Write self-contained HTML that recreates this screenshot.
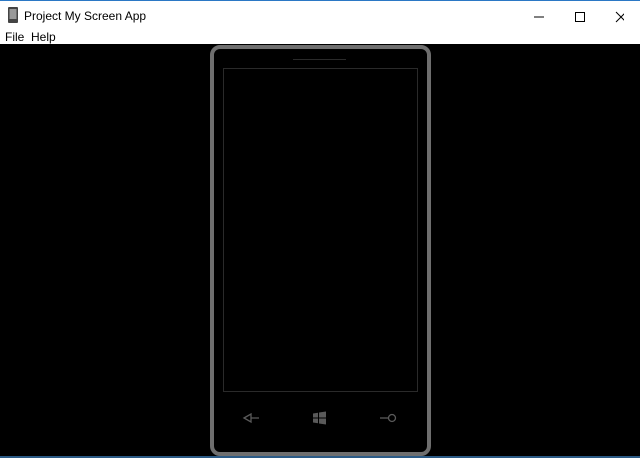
<!DOCTYPE html>
<html><head><style>
body{margin:0;width:640px;height:458px;overflow:hidden;background:#000;font-family:"Liberation Sans",sans-serif;position:relative}
.title{position:absolute;left:0;top:0;width:640px;height:30px;background:#fff;border-top:1px solid #2b78c5;box-sizing:border-box}
.title span{position:absolute;left:24px;top:8px;font-size:12px;color:#000}
.menu{position:absolute;left:0;top:30px;width:640px;height:14px;background:#fff;font-size:12px}
.menu span{position:absolute;top:0}
.phone{position:absolute;left:210px;top:45px;width:221px;height:411px;box-sizing:border-box;border:4px solid #6e6e6e;border-radius:10px}
.screen{position:absolute;left:223px;top:68px;width:195px;height:324px;box-sizing:border-box;border:1px solid #2a2a2a}
.sp{position:absolute;left:293px;top:59px;width:53px;height:1px;background:#2a2a2a}
.bot{position:absolute;left:0;top:456px;width:640px;height:2px;background:#2b5a85}
</style></head><body>
<div class="title">
<svg style="position:absolute;left:7px;top:6px" width="12" height="17"><rect x="1" y="0" width="10" height="16" rx="1" fill="#444"/><rect x="2.5" y="2" width="7" height="10" fill="#999"/></svg>
<span>Project My Screen App</span>
<svg style="position:absolute;left:534px;top:10px" width="90" height="12"><line x1="0" y1="6" x2="10" y2="6" stroke="#000"/><rect x="41.5" y="1.5" width="9" height="9" fill="none" stroke="#000"/><path d="M82 1l10 10M92 1l-10 10" stroke="#000"/></svg>
</div>
<div class="menu"><span style="left:5px">File</span><span style="left:31px">Help</span></div>
<div class="phone"></div>
<div class="sp"></div>
<div class="screen"></div>
<svg style="position:absolute;left:240px;top:410px" width="160" height="16">
<path d="M4 8l7-4v8z M11 8h8" fill="none" stroke="#5a5a5a" stroke-width="1.3"/>
<path d="M73 3.5l5-0.8v4.8h-5z M79 2.5l7-1v6h-7z M73 8.5h5v4.8l-5-0.8z M79 8.5h7v6l-7-1z" fill="#5a5a5a"/>
<path d="M140 8h8" stroke="#5a5a5a" stroke-width="1.3"/><circle cx="152" cy="8" r="3.5" fill="none" stroke="#5a5a5a" stroke-width="1.3"/>
</svg>
<div class="bot"></div>
</body></html>
